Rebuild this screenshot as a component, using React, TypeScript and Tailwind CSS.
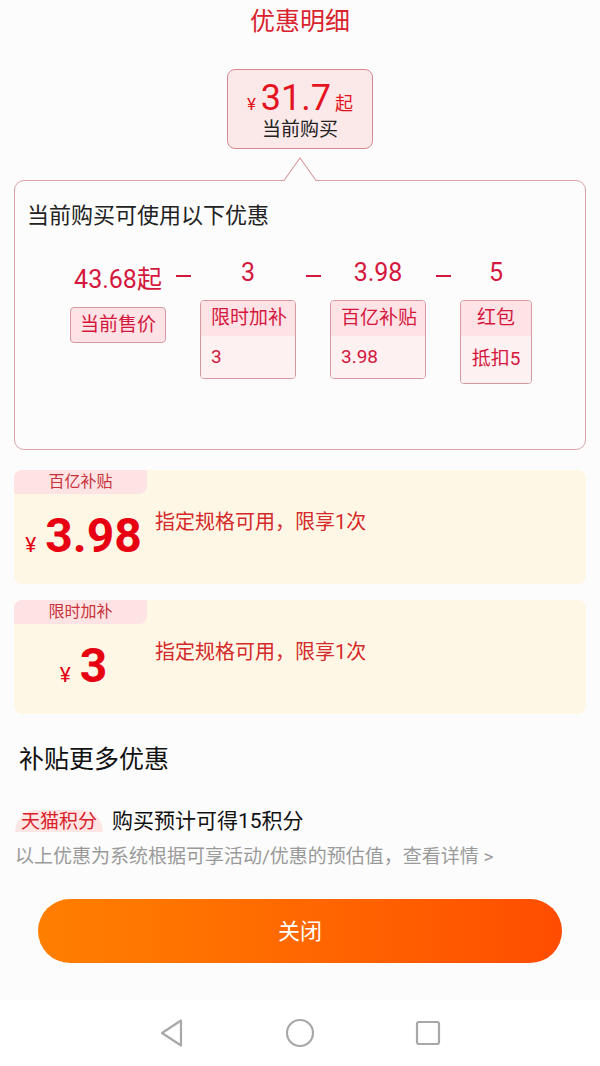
const font = "font-['Roboto','Noto_Sans_CJK_SC',sans-serif]";

function Minus() {
  return (
    <div className="w-[34px] flex justify-center">
      <div className="mt-[17px] h-[2px] w-[15px] bg-[#d4183d]" />
    </div>
  );
}

function StackBox({ title, value, center, w, h }: { title: string; value: string; center?: boolean; w: string; h: string }) {
  return (
    <div className={`${w} ${h} flex flex-col rounded-[4px] border border-[#d49aa0] overflow-hidden`}>
      <div className={`h-[35px] bg-[#fde2e6] flex items-center text-[19px] text-[#d4183d] ${center ? 'justify-center' : 'pl-[10px]'}`}>
        {title}
      </div>
      <div className={`flex-1 bg-[#fdf1f1] flex items-center text-[19px] text-[#d4183d] ${center ? 'justify-center' : 'pl-[10px]'}`}>
        {value}
      </div>
    </div>
  );
}

function CouponCard({ tag, amount }: { tag: string; amount: string }) {
  return (
    <div className="mx-[14px] h-[114px] rounded-[8px] bg-[#fff7e6] flex flex-col">
      <div className="w-[133px] h-[24px] rounded-tl-[8px] rounded-br-[8px] bg-[#fde3e3] flex items-center justify-center text-[16px] text-[#c8323a]">
        {tag}
      </div>
      <div className="flex">
        <div className="w-[133px] pl-[6px] mt-[18px] flex justify-center items-baseline text-[#e60012]">
          <span className="text-[21px] mr-[9px]">¥</span>
          <span className="text-[48px] leading-[48px] font-bold">{amount}</span>
        </div>
        <div className="pl-[8px] mt-[16px] text-[20px] leading-[24px] text-[#d42a2a]">指定规格可用，限享1次</div>
      </div>
    </div>
  );
}

export default function App() {
  return (
    <div className={`w-[600px] h-[1066px] bg-[#fcfcfc] flex flex-col ${font}`}>
      {/* title */}
      <div className="h-[44px] flex items-center justify-center text-[25px] text-[#d9232e]">优惠明细</div>

      {/* current price */}
      <div className="mt-[25px] mx-auto w-[146px] h-[80px] rounded-[8px] border border-[#d38b90] bg-[#fbe8e9] flex flex-col items-center">
        <div className="mt-[8px] h-[40px] flex items-baseline text-[#e4141e]">
          <span className="text-[17px] mr-[5px]">¥</span>
          <span className="text-[36px] leading-[40px]">31.7</span>
          <span className="text-[18px] ml-[4px]">起</span>
        </div>
        <div className="text-[19px] leading-[24px] text-[#222]">当前购买</div>
      </div>

      {/* breakdown box */}
      <div className="relative mt-[31px] mx-[14px] h-[270px] rounded-[10px] border border-[#dea2a6]">
        <svg className="absolute top-[-24px] left-[269px]" width="32" height="26" viewBox="0 0 32 26">
          <path d="M0 24.8 L16 1 L32 24.8 Z" fill="#fcfcfc" />
          <path d="M0 23.5 L16 1 L32 23.5" fill="none" stroke="#d9a0a5" strokeWidth="1.2" />
        </svg>
        <div className="pl-[12px] pt-[21px] text-[22px] leading-[28px] text-[#222]">当前购买可使用以下优惠</div>
        <div className="flex items-start pl-[55px] mt-[28px]">
          <div className="w-[96px] flex flex-col items-center mt-[7px]">
            <div className="h-[30px] leading-[30px] text-[25px] text-[#d4183d] whitespace-nowrap">43.68起</div>
            <div className="mt-[12px] w-[96px] h-[36px] rounded-[4px] border border-[#d49aa0] bg-[#fde2e6] flex items-center justify-center text-[19px] text-[#d4183d]">
              当前售价
            </div>
          </div>
          <Minus />
          <div className="w-[96px] flex flex-col items-center">
            <div className="h-[30px] leading-[30px] text-[25px] text-[#d4183d]">3</div>
            <div className="mt-[12px]">
              <StackBox title="限时加补" value="3" w="w-[96px]" h="h-[79px]" />
            </div>
          </div>
          <Minus />
          <div className="w-[96px] flex flex-col items-center">
            <div className="h-[30px] leading-[30px] text-[25px] text-[#d4183d]">3.98</div>
            <div className="mt-[12px]">
              <StackBox title="百亿补贴" value="3.98" w="w-[96px]" h="h-[79px]" />
            </div>
          </div>
          <Minus />
          <div className="w-[72px] flex flex-col items-center">
            <div className="h-[30px] leading-[30px] text-[25px] text-[#d4183d]">5</div>
            <div className="mt-[12px]">
              <StackBox title="红包" value="抵扣5" center w="w-[72px]" h="h-[84px]" />
            </div>
          </div>
        </div>
      </div>

      {/* coupons */}
      <div className="mt-[20px]">
        <CouponCard tag="百亿补贴" amount="3.98" />
      </div>
      <div className="mt-[16px]">
        <CouponCard tag="限时加补" amount="3" />
      </div>

      {/* more */}
      <div className="mt-[30px] pl-[19px] text-[25px] leading-[32px] text-[#111]">补贴更多优惠</div>
      <div className="mt-[33px] pl-[15px] flex items-center h-[24px]">
        <span className="h-[22px] px-[6px] rounded-t-full rounded-b-[6px] bg-[#fde6e4] text-[19px] leading-[24px] text-[#d9202a] overflow-visible">天猫积分</span>
        <span className="ml-[9px] text-[21px] leading-[24px] text-[#111]">购买预计可得15积分</span>
      </div>
      <div className="mt-[12px] pl-[15px] text-[19px] leading-[24px] text-[#9a9a9a]">以上优惠为系统根据可享活动/优惠的预估值，查看详情 &gt;</div>

      {/* close button */}
      <button className="mt-[30px] mx-[38px] h-[64px] rounded-full bg-gradient-to-r from-[#ff7f00] to-[#ff4c00] text-white text-[22px] flex items-center justify-center">
        关闭
      </button>

      {/* nav bar */}
      <div className="mt-auto h-[66px] bg-white flex items-center justify-center gap-[100px]">
        <svg width="26" height="30" viewBox="0 0 26 30">
          <path d="M22 2.5 L3 15 L22 27.5 Z" fill="none" stroke="#a8a8a8" strokeWidth="2.2" strokeLinejoin="round" />
        </svg>
        <svg width="30" height="30" viewBox="0 0 30 30">
          <circle cx="15" cy="15" r="13" fill="none" stroke="#a8a8a8" strokeWidth="2.2" />
        </svg>
        <svg width="26" height="26" viewBox="0 0 26 26">
          <rect x="2" y="2" width="22" height="22" rx="2" fill="none" stroke="#a8a8a8" strokeWidth="2.2" />
        </svg>
      </div>
    </div>
  );
}
